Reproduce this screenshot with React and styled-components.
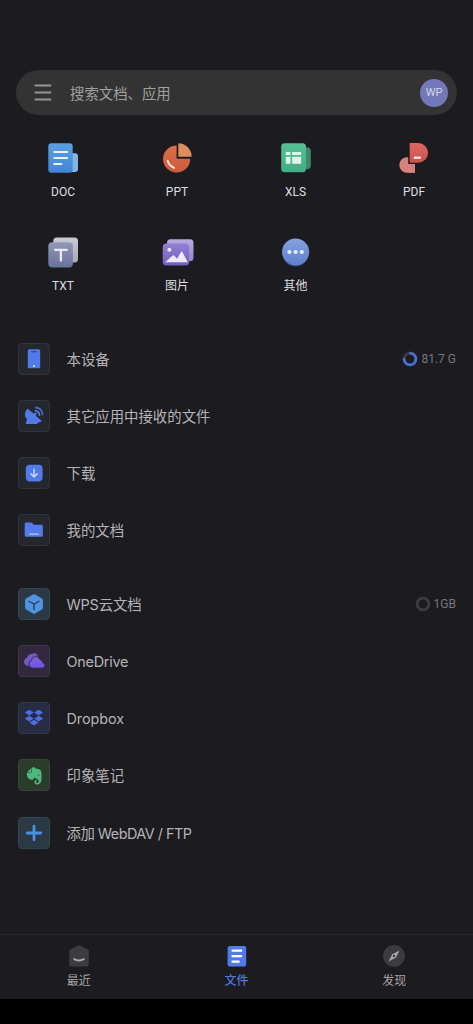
import styled, { createGlobalStyle } from "styled-components";
import { FaEvernote } from "react-icons/fa";

const GlobalStyle = createGlobalStyle`
  * {
    box-sizing: border-box;
  }

  body {
    margin: 0;
    background: #000;
    font-family: Roboto, "Noto Sans CJK SC", sans-serif;
  }
`;

const Screen = styled.div`
  display: flex;
  flex-direction: column;
  width: 473px;
  height: 1024px;
  padding-bottom: 25px;
  overflow: hidden;
  background: #000;
`;

const Content = styled.main`
  flex: 1;
  padding-top: 70px;
  background: #1c1b20;
`;

const SearchBar = styled.div`
  display: flex;
  align-items: center;
  height: 45px;
  margin: 0 16px;
  padding: 0 9px 0 18px;
  border-radius: 23px;
  background: #333333;
`;

const SearchText = styled.span`
  flex: 1;
  margin-left: 18px;
  color: #a0a0a0;
  font: 14.4px/22px "Noto Sans CJK SC", sans-serif;
`;

const Avatar = styled.div`
  width: 28px;
  height: 28px;
  border-radius: 50%;
  background: #7378b8;
  color: #d6d7e9;
  font-size: 11px;
  line-height: 27px;
  text-align: center;
`;

const TypeGrid = styled.section`
  display: grid;
  grid-template-columns: 114px 114px 123px 114px;
  grid-auto-rows: 94.7px;
  padding: 25px 0 0 6px;
`;

const TypeItem = styled.div`
  display: flex;
  flex-direction: column;
  align-items: center;
  color: #dedee0;
  font-size: 12px;
  line-height: 18px;

  svg {
    margin-bottom: 6.6px;
  }
`;

const PlaceList = styled.section`
  display: flex;
  flex-direction: column;
  padding: 0 17px 0 18px;
  margin-top: ${(props) => props.$top}px;
`;

const Place = styled.div`
  display: flex;
  align-items: center;
  height: 57.25px;
`;

const Tile = styled.div`
  display: flex;
  width: 32px;
  height: 32px;
  margin-right: 16.5px;
  border: 1px solid ${(props) => props.$border || "#33343c"};
  border-radius: 4px;
  background: ${(props) => props.$bg || "#25272e"};

  > svg {
    margin: -1px;
  }
`;

const PlaceName = styled.span`
  flex: 1;
  padding-top: 2px;
  color: #b4b4b8;
  font: 14.4px/22px Inter, "Noto Sans CJK SC", sans-serif;
  letter-spacing: ${(props) => props.$spacing || 0}px;
`;

const Usage = styled.div`
  display: flex;
  align-items: center;
  gap: 3px;
  color: #77777c;
  font-size: 12px;
  line-height: 16px;
`;

const TabBar = styled.nav`
  display: flex;
  height: 65px;
  padding-top: 10px;
  border-top: 1px solid #28272d;
  background: #1c1b20;
`;

const Tab = styled.div`
  display: flex;
  flex: 1;
  flex-direction: column;
  align-items: center;
  color: ${(props) => (props.$active ? "#5078dc" : "#a5a5a8")};
  font-size: 12px;
  font-weight: ${(props) => (props.$active ? 500 : 400)};
  line-height: 18px;

  svg {
    margin-bottom: 5px;
  }
`;

const MenuIcon = () => (
  <svg width="18" height="18" viewBox="0 0 18 18">
    <path d="M.6 1.5h16.6M.6 8.5h16.6M.6 15.5h16.6" stroke="#969696" strokeWidth="2" />
  </svg>
);

const Gradient = ({ id, from, to }) => (
  <linearGradient id={id} x1="0" y1="0" x2="0" y2="1">
    <stop stopColor={from} />
    <stop offset="1" stopColor={to} />
  </linearGradient>
);

const TypeSvg = ({ children }) => (
  <svg width="36" height="36" viewBox="0 0 36 36">
    {children}
  </svg>
);

const DocIcon = () => (
  <TypeSvg>
    <Gradient id="doc" from="#5aa0e0" to="#4285d8" />
    <path d="M24 13.3h6q3 0 3 3V29q0 3-3 3h-6z" fill="#82b6e6" />
    <rect x="3.3" y="3.3" width="24.4" height="29.4" rx="3" fill="url(#doc)" />
    <path d="M9.3 12h12.8M9.3 18h12.8M9.3 24h7" stroke="#e8f2fc" strokeWidth="2.2" strokeLinecap="round" />
  </TypeSvg>
);

const PptIcon = () => (
  <TypeSvg>
    <Gradient id="ppt" from="#d97048" to="#cb5a3e" />
    <circle cx="17.6" cy="19" r="13.6" fill="url(#ppt)" />
    <path d="M17.6 1.5H34.5V18.7H17.6z" fill="#1c1b20" />
    <path d="M19.3 3.3a13.6 13.6 0 0 1 13.4 13.5H19.3z" fill="#de8d5c" />
    <path d="M8.6 20.8q1.5 5 6.4 7" stroke="#fbe5d9" strokeWidth="2" strokeLinecap="round" fill="none" />
  </TypeSvg>
);

const XlsIcon = () => (
  <TypeSvg>
    <Gradient id="xls" from="#57c097" to="#42ac83" />
    <rect x="20" y="7.3" width="12.8" height="22" rx="4" fill="#3f876d" />
    <rect x="3.2" y="3.3" width="24.8" height="29" rx="3.5" fill="url(#xls)" />
    <path d="M7.8 12h4.7v3H7.8zM14.2 12h9v3h-9zM7.8 16.8h4.7v7H7.8zM14.2 16.8h9v7h-9z" fill="#dff5eb" />
  </TypeSvg>
);

const PdfIcon = () => (
  <TypeSvg>
    <Gradient id="pdf" from="#df6761" to="#cb514e" />
    <path d="M19 17.3h-8a7.7 7.7 0 0 0 0 15.4h8z" fill="#d8807e" />
    <path d="M12.2 2H21v22.2h-8.8z" fill="#1c1b20" />
    <path d="M12.2 24.1H19v8.6h-6.8z" fill="#d8807e" />
    <path d="M13.7 3h8.5a9.85 9.85 0 0 1 0 19.7h-8.5z" fill="url(#pdf)" />
    <path d="M17.8 17.7h7.2" stroke="#fce8e7" strokeWidth="2.2" />
  </TypeSvg>
);

const TxtIcon = () => (
  <TypeSvg>
    <Gradient id="txtBack" from="#c9cbd4" to="#a9acb9" />
    <Gradient id="txt" from="#9298b8" to="#69729c" />
    <rect x="8.3" y="2.6" width="24.7" height="25" rx="3.5" fill="url(#txtBack)" />
    <rect x="3.3" y="7.2" width="24.6" height="25.2" rx="4" fill="url(#txt)" />
    <path d="M10 14.8h11.8M15.9 15v10.6" stroke="#e8e9f1" strokeWidth="2.3" strokeLinecap="round" />
  </TypeSvg>
);

const ImageIcon = () => (
  <TypeSvg>
    <Gradient id="imgBack" from="#b8aadd" to="#9284c9" />
    <Gradient id="img" from="#9180d5" to="#715fbd" />
    <rect x="8" y="4.3" width="26.5" height="22" rx="3.5" fill="url(#imgBack)" />
    <rect x="3.7" y="8.4" width="26.4" height="22.2" rx="3.5" fill="url(#img)" />
    <circle cx="10.3" cy="14.7" r="2" fill="#eeeafa" />
    <path d="M6.3 27.2l7-6.5q1.2-1 2.3.2l2.6 2.8 3.5-6.3q1-1.8 2 0l5 9.8z" fill="#eeeafa" />
  </TypeSvg>
);

const MoreIcon = () => (
  <TypeSvg>
    <Gradient id="more" from="#86a2e0" to="#5e7ecf" />
    <circle cx="17.6" cy="18.6" r="13" fill="#32406c" />
    <circle cx="17.6" cy="17" r="13.6" fill="url(#more)" />
    <path d="M11.4 17h.01M17.6 17h.01M23.8 17h.01" stroke="#e7eefc" strokeWidth="4.2" strokeLinecap="round" />
  </TypeSvg>
);

const PlaceSvg = ({ children }) => (
  <svg width="32" height="32" viewBox="0 0 32 32">
    {children}
  </svg>
);

const PhoneIcon = () => (
  <PlaceSvg>
    <rect x="9.8" y="6.3" width="12.4" height="19" rx="1.6" fill="#527ae8" />
    <path d="M13.2 8.7h5.5" stroke="#2e4a94" strokeWidth="1.2" />
    <circle cx="16" cy="22.9" r="1" fill="#dce5ff" />
  </PlaceSvg>
);

const DishIcon = () => (
  <PlaceSvg>
    <path
      d="M9.2 8.4Q4.8 15 9 19.6L7.9 22.4q-.6 1.7 1.2 1.7h9.5q1.6 0 1-1.5 2.4 0 4.3-1.5l-6.2-5.3 1-2.2-1.1-1-2 1z"
      fill="#527ae8"
    />
    <path d="M17.5 10.9q3.6.5 4 4.2" stroke="#527ae8" strokeWidth="1.8" fill="none" strokeLinecap="round" />
    <path d="M17.7 7.5q6.2.5 6.8 6.9" stroke="#416ac8" strokeWidth="1.8" fill="none" strokeLinecap="round" />
  </PlaceSvg>
);

const DownloadIcon = () => (
  <PlaceSvg>
    <rect x="7.8" y="7.8" width="16.8" height="16.6" rx="3.8" fill="#527ae8" />
    <path d="M16.1 12.2v7.2M13 16.9l3.1 3 3.1-3" stroke="#c7d6ff" strokeWidth="1.5" fill="none" strokeLinecap="round" strokeLinejoin="round" />
  </PlaceSvg>
);

const FolderIcon = () => (
  <PlaceSvg>
    <path d="M6.7 9.9q0-1.4 1.4-1.4h5q.7 0 1.2.6l1.4 1.7h7.8q1.4 0 1.4 1.4v9.2q0 1.4-1.4 1.4H8.1q-1.4 0-1.4-1.4z" fill="#527ae8" />
    <path d="M11 20.1h9.8" stroke="#b5c8fb" strokeWidth="1.3" />
  </PlaceSvg>
);

const CubeIcon = () => (
  <PlaceSvg>
    <path d="M15 6.6q1-.6 2 0l6.9 3.8q1 .6 1 1.7v7.7q0 1.1-1 1.7L17 25.4q-1 .6-2 0l-6.9-3.9q-1-.6-1-1.7v-7.7q0-1.1 1-1.7z" fill="#4f94e2" />
    <path d="M10.5 13l5.5 3 5.5-3M16 16v6" stroke="#2b3d55" strokeWidth="1.4" fill="none" />
  </PlaceSvg>
);

const OneDriveIcon = () => (
  <PlaceSvg>
    <Gradient id="oneDrive" from="#7e61d8" to="#6c54f0" />
    <path d="M9.6 20.8a4.1 4.1 0 0 1-.5-8Q10.2 9 13.9 9.1q2.8-1.7 5 .5 1.5 1.6 1.1 3l-8 8.2z" fill="#7259c5" />
    <path d="M14 23.1a3.9 3.9 0 0 1-.5-7.5Q14 11.6 17.8 11.7q3.2.2 4.2 3.1 2.7.3 2.9 3a2.7 2.7 0 0 1-.9 5.3z" fill="url(#oneDrive)" stroke="#33294b" strokeWidth=".9" />
  </PlaceSvg>
);

const DropboxIcon = () => (
  <PlaceSvg>
    <path
      d="M11.3 7.8l4.5 2.8-4.5 2.8-4.5-2.8zM20.7 7.8l4.5 2.8-4.5 2.8-4.5-2.8zM11.3 13.8l4.5 2.8-4.5 2.8-4.5-2.8zM20.7 13.8l4.5 2.8-4.5 2.8-4.5-2.8zM16 17.7l4.5 2.8L16 23.4l-4.5-2.9z"
      fill="#4c6ee0"
    />
  </PlaceSvg>
);

const EvernoteIcon = () => (
  <PlaceSvg>
    <FaEvernote x="6.3" y="7" width="19.8" height="19.8" size={19.8} color="#4fb77c" />
  </PlaceSvg>
);

const PlusIcon = () => (
  <PlaceSvg>
    <path d="M16 9.2v13.6M9.2 16h13.6" stroke="#4990e2" strokeWidth="2.8" strokeLinecap="round" />
  </PlaceSvg>
);

const Ring = ({ used }) => (
  <svg width="16" height="16" viewBox="0 0 16 16">
    <circle cx="8" cy="8" r="5.9" fill="none" stroke="#3c3c43" strokeWidth="2.7" />
    <circle
      cx="8"
      cy="8"
      r="5.9"
      fill="none"
      stroke="#4a70d6"
      strokeWidth="2.7"
      pathLength="100"
      strokeDasharray={`${used} 100`}
      transform="rotate(-5 8 8) rotate(-90 8 8)"
    />
  </svg>
);

const RecentIcon = () => (
  <svg width="22" height="22" viewBox="0 0 22 22">
    <path d="M10 .5q1-.5 2 0l7.8 4.1q1 .6 1 1.6v13q0 2.3-2.3 2.3h-15q-2.3 0-2.3-2.3v-13q0-1 1-1.6z" fill="#3b3b40" />
    <path d="M6.2 14.2q4.8 2.6 9.6 0" stroke="#aaaab0" strokeWidth="1.9" fill="none" strokeLinecap="round" />
  </svg>
);

const FilesIcon = () => (
  <svg width="22" height="22" viewBox="0 0 22 22">
    <rect x="1.6" y=".9" width="18.6" height="20.7" rx="2" fill="#527be8" />
    <path d="M5.6 5.6h10.5M5.6 11.1h10.5M5.6 16.6h8" stroke="#fff" strokeWidth="2.2" />
  </svg>
);

const DiscoverIcon = () => (
  <svg width="22" height="22" viewBox="0 0 22 22">
    <circle cx="11" cy="11" r="10.9" fill="#3b3b40" />
    <path d="M16.6 5.4l-3.8 7.3-7.4 3.9 3.8-7.3z" fill="#a5a5a9" />
    <circle cx="11" cy="11" r="1.2" fill="#3b3b40" />
  </svg>
);

const fileTypes = [
  { label: "DOC", Icon: DocIcon },
  { label: "PPT", Icon: PptIcon },
  { label: "XLS", Icon: XlsIcon },
  { label: "PDF", Icon: PdfIcon },
  { label: "TXT", Icon: TxtIcon },
  { label: "图片", Icon: ImageIcon },
  { label: "其他", Icon: MoreIcon },
];

const localPlaces = [
  { name: "本设备", Icon: PhoneIcon, usage: "81.7 G", used: 79 },
  { name: "其它应用中接收的文件", Icon: DishIcon },
  { name: "下载", Icon: DownloadIcon },
  { name: "我的文档", Icon: FolderIcon },
];

const cloudPlaces = [
  { name: "WPS云文档", Icon: CubeIcon, bg: "#2b3944", border: "#344450", spacing: -0.15, usage: "1GB", used: 0 },
  { name: "OneDrive", Icon: OneDriveIcon, bg: "#33293f", border: "#40364d", spacing: -0.25 },
  { name: "Dropbox", Icon: DropboxIcon, bg: "#282c43", border: "#34384f", spacing: -0.05 },
  { name: "印象笔记", Icon: EvernoteIcon, bg: "#2b3b2c", border: "#364737" },
  { name: "添加 WebDAV / FTP", Icon: PlusIcon, bg: "#2b3944", border: "#344450", spacing: -0.5 },
];

const Places = ({ items, top }) => (
  <PlaceList $top={top}>
    {items.map(({ name, Icon, bg, border, spacing, usage, used }) => (
      <Place key={name}>
        <Tile $bg={bg} $border={border}>
          <Icon />
        </Tile>
        <PlaceName $spacing={spacing}>{name}</PlaceName>
        {usage && (
          <Usage>
            <Ring used={used} />
            <span>{usage}</span>
          </Usage>
        )}
      </Place>
    ))}
  </PlaceList>
);

export default function App() {
  return (
    <>
      <GlobalStyle />
      <Screen>
        <Content>
          <SearchBar>
            <MenuIcon />
            <SearchText>搜索文档、应用</SearchText>
            <Avatar>WP</Avatar>
          </SearchBar>
          <TypeGrid>
            {fileTypes.map(({ label, Icon }) => (
              <TypeItem key={label}>
                <Icon />
                {label}
              </TypeItem>
            ))}
          </TypeGrid>
          <Places items={localPlaces} top={0.5} />
          <Places items={cloudPlaces} top={16} />
        </Content>
        <TabBar>
          <Tab>
            <RecentIcon />
            最近
          </Tab>
          <Tab $active>
            <FilesIcon />
            文件
          </Tab>
          <Tab>
            <DiscoverIcon />
            发现
          </Tab>
        </TabBar>
      </Screen>
    </>
  );
}
